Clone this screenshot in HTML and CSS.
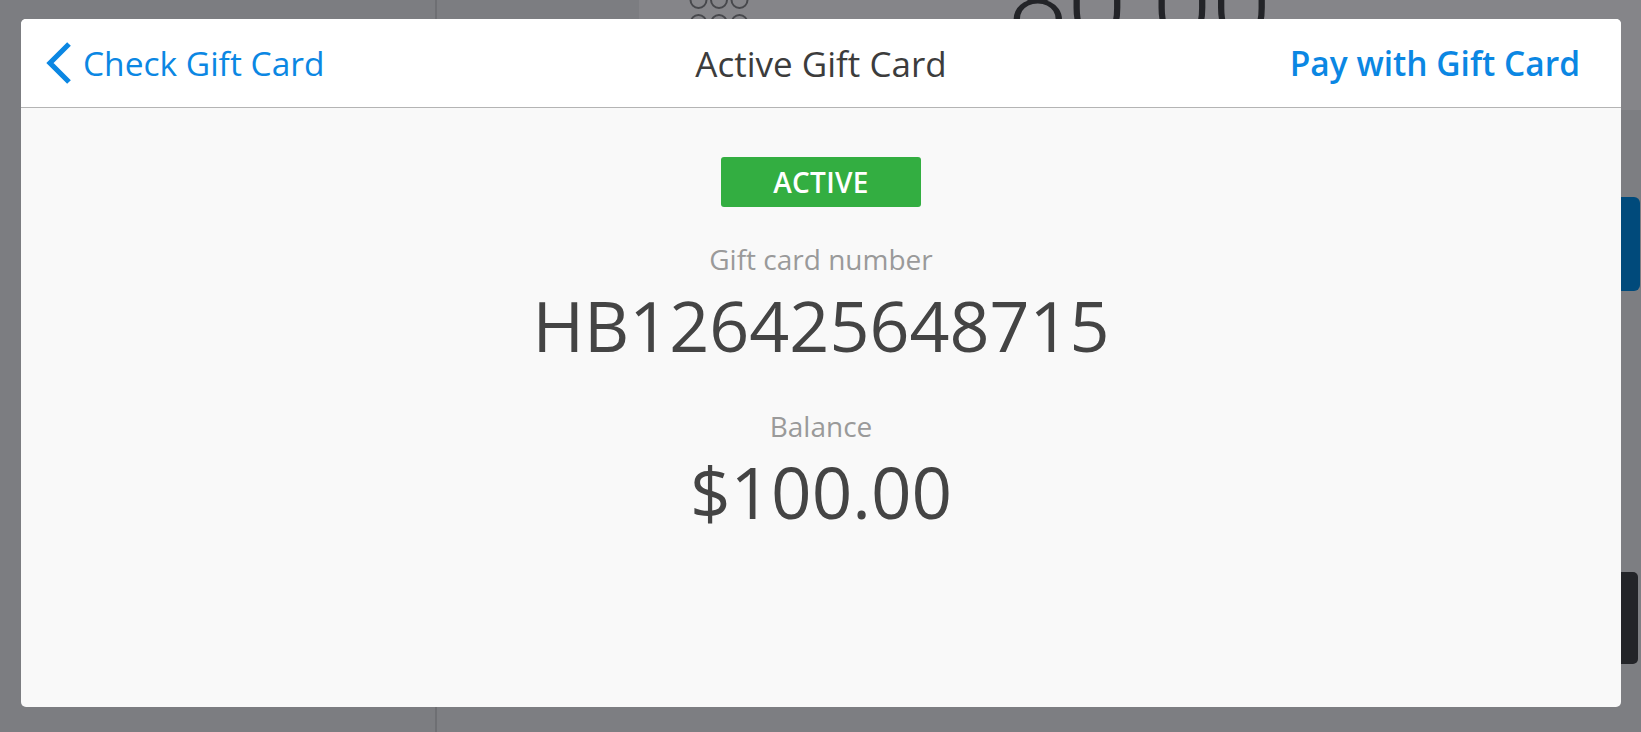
FILE: index.html
```html
<!DOCTYPE html>
<html lang="en">
<head>
<meta charset="utf-8">
<title>Active Gift Card</title>
<link rel="stylesheet" href="styles.css">
</head>
<body>
<div class="app">
  <aside class="sidebar"></aside>
  <main class="main">
    <div class="topbar">
      <div class="topbar-left"></div>
      <div class="topbar-right">
        <svg class="keypad" width="64" height="70" viewBox="0 0 64 70">
          <g fill="none" stroke="#47484c" stroke-width="2">
            <circle cx="9.5" cy="10" r="8"/><circle cx="30" cy="10" r="8"/><circle cx="50.5" cy="10" r="8"/>
            <circle cx="9.5" cy="33" r="8"/><circle cx="30" cy="33" r="8"/><circle cx="50.5" cy="33" r="8"/>
            <circle cx="9.5" cy="56" r="8"/><circle cx="30" cy="56" r="8"/><circle cx="50.5" cy="56" r="8"/>
          </g>
        </svg>
        <div class="amount">80.00</div>
      </div>
    </div>
    <div class="main-body">
      <div class="actions">
        <div class="btn btn-blue"></div>
        <div class="btn btn-dark"></div>
      </div>
    </div>
  </main>
</div>

<div class="modal">
  <header class="modal-header">
    <a class="nav-back">
      <svg class="chevron" width="27" height="42" viewBox="0 0 27 42">
        <path d="M24 2 L5 21 L24 40" fill="none" stroke="#0b87e3" stroke-width="5.2"/>
      </svg>
      <span>Check Gift Card</span>
    </a>
    <h1 class="modal-title">Active Gift Card</h1>
    <a class="nav-action">Pay with Gift Card</a>
  </header>
  <section class="modal-body">
    <div class="badge">ACTIVE</div>
    <div class="label label-number">Gift card number</div>
    <div class="value">HB126425648715</div>
    <div class="label label-balance">Balance</div>
    <div class="value value-balance">$100.00</div>
  </section>
</div>
</body>
</html>
```

FILE: styles.css
```css
* { box-sizing: border-box; }

html, body {
  margin: 0;
  padding: 0;
}

body {
  width: 1641px;
  height: 732px;
  overflow: hidden;
  background: #7d7e82;
  font-family: "Open Sans", "Liberation Sans", sans-serif;
  position: relative;
}

/* Background app (dimmed behind the modal) */
.app {
  display: flex;
  height: 732px;
}

.sidebar {
  width: 437px;
  flex: none;
  background: #7c7d81;
  border-right: 2px solid #6e6f73;
}

.main {
  flex: 1;
  display: flex;
  flex-direction: column;
}

.topbar {
  height: 110px;
  display: flex;
}

.topbar-left {
  width: 202px;
  background: #7c7d81;
}

.topbar-right {
  flex: 1;
  background: #858589;
  display: flex;
  align-items: flex-start;
  overflow: hidden;
}

.keypad {
  margin-left: 50px;
  margin-top: -10px;
  flex: none;
}

.amount {
  margin-left: 255px;
  margin-top: -50px;
  font-family: Roboto, "Liberation Sans", sans-serif;
  font-weight: 300;
  font-size: 107px;
  line-height: 107px;
  color: #232428;
}

.main-body {
  flex: 1;
  display: flex;
  justify-content: flex-end;
}

.actions {
  width: 300px;
  display: flex;
  flex-direction: column;
  align-items: flex-end;
}

.btn-blue {
  margin-top: 87px;
  width: 300px;
  height: 94px;
  background: #004a7b;
  border-radius: 6px;
  margin-right: 1px;
}

.btn-dark {
  margin-top: 281px;
  width: 300px;
  height: 92px;
  background: #232428;
  border-radius: 5px;
  margin-right: 3px;
}

/* Modal */
.modal {
  position: absolute;
  left: 21px;
  top: 19px;
  width: 1600px;
  height: 688px;
  border-radius: 5px;
  background: #f9f9f9;
  overflow: hidden;
  display: flex;
  flex-direction: column;
}

.modal-header {
  height: 89px;
  flex: none;
  background: #ffffff;
  border-bottom: 1px solid #b4b4b4;
  display: grid;
  grid-template-columns: 1fr auto 1fr;
  align-items: center;
  padding: 0 24px;
}

.nav-back {
  display: flex;
  align-items: center;
  gap: 11px;
  color: #0b87e3;
  font-size: 33.5px;
  justify-self: start;
}

.chevron { display: block; flex: none; }

.modal-title {
  margin: 0;
  font-weight: 400;
  font-size: 35px;
  color: #3c3c3c;
}

.nav-action {
  justify-self: end;
  margin-right: 17px;
  color: #0b87e3;
  font-weight: 600;
  font-size: 33.5px;
}

.modal-body {
  flex: 1;
  display: flex;
  flex-direction: column;
  align-items: center;
}

.badge {
  margin-top: 49px;
  width: 200px;
  height: 50px;
  border-radius: 3px;
  background: #33ae41;
  color: #ffffff;
  font-weight: 600;
  font-size: 28px;
  letter-spacing: 0.3px;
  display: flex;
  align-items: center;
  justify-content: center;
}

.label {
  font-size: 28px;
  line-height: 28px;
  color: #9a9a9a;
}

.label-number { margin-top: 38px; }
.label-balance { margin-top: 52px; }

.value {
  margin-top: 17px;
  font-size: 70px;
  line-height: 70px;
  color: #444444;
}

.value-balance {
  font-size: 71px;
}
```
